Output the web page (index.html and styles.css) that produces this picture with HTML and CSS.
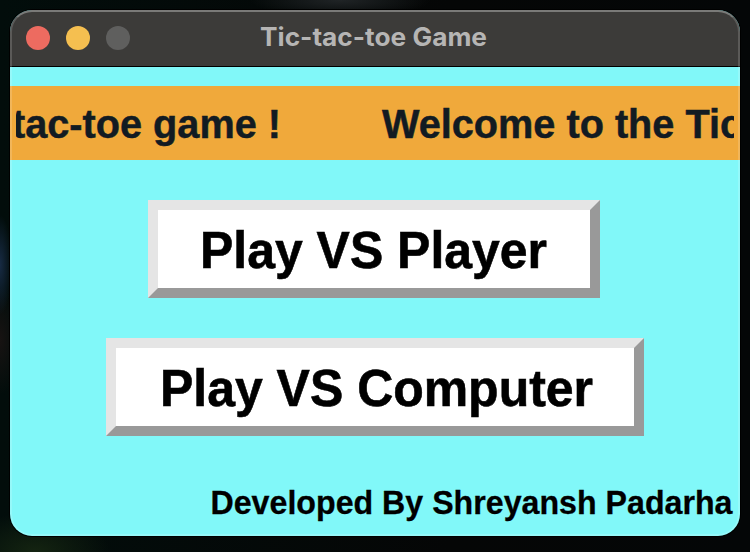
FILE: index.html
```
<!DOCTYPE html>
<html lang="en">
<head>
<meta charset="utf-8">
<title>Tic-tac-toe Game</title>
<link rel="stylesheet" href="styles.css">
</head>
<body>
<main class="window">
  <header class="titlebar">
    <div class="lights"><i class="light red"></i><i class="light yellow"></i><i class="light gray"></i></div>
    <svg class="title" width="240" height="56"><text x="6" y="36" textLength="227" lengthAdjust="spacingAndGlyphs">Tic-tac-toe Game</text></svg>
  </header>
  <div class="banner">
    <svg class="marquee" width="718" height="74">
      <text x="-4" y="52" textLength="269" lengthAdjust="spacingAndGlyphs">tac-toe game !</text>
      <text x="366" y="52" textLength="360" lengthAdjust="spacingAndGlyphs">Welcome to the Tic</text>
    </svg>
  </div>
  <div class="menu">
    <button class="play player"><svg width="432" height="78"><text x="42" y="58" textLength="347" lengthAdjust="spacingAndGlyphs">Play VS Player</text></svg></button>
    <button class="play computer"><svg width="518" height="78"><text x="44" y="58" textLength="433" lengthAdjust="spacingAndGlyphs">Play VS Computer</text></svg></button>
  </div>
  <footer class="credit">
    <svg width="530" height="42"><text x="0.5" y="30" textLength="522" lengthAdjust="spacingAndGlyphs">Developed By Shreyansh Padarha</text></svg>
  </footer>
</main>
</body>
</html>
```
FILE: styles.css
```
* { box-sizing: border-box; }
body {
  margin: 0;
  padding: 10px;
  height: 552px;
  overflow: hidden;
  font-family: "Liberation Sans", Arial, sans-serif;
  font-weight: 700;
  background:
    radial-gradient(ellipse 12px 50px at 0 265px, #172b44, transparent),
    radial-gradient(ellipse 20px 55px at 0 340px, #171312, transparent),
    radial-gradient(ellipse 75px 40px at 35px 552px, #142411, transparent),
    radial-gradient(ellipse 90px 18px at 340px 0, #202426, transparent),
    linear-gradient(90deg, #020d0b, #050606 60%, #040607);
}
svg { display: block; }
.window {
  position: relative;
  display: flex;
  flex-direction: column;
  width: 730px;
  height: 526px;
  border-radius: 22px;
  overflow: hidden;
  background: #81f8f9;
  box-shadow: 0 0 0 1px #000;
}
.window::after {
  content: "";
  position: absolute;
  inset: 0;
  border: 2px solid rgba(255, 255, 255, 0.16);
  border-top-color: rgba(255, 255, 255, 0.32);
  border-radius: 22px;
  pointer-events: none;
}
.titlebar {
  flex: none;
  display: grid;
  grid-template-columns: 1fr 240px 1fr;
  align-items: center;
  height: 57px;
  background: #3c3b39;
  border-bottom: 1px solid #000;
}
.lights { display: flex; gap: 16px; padding-left: 16px; }
.light { width: 24px; height: 24px; border-radius: 50%; }
.red { background: #ed6b60; }
.yellow { background: #f5bf50; }
.gray { background: #5f5f5e; }
.title {
  margin-left: -1px;
  font-family: Inter, sans-serif;
  font-size: 25.5px;
  font-weight: 700;
  fill: #b6b5b4;
}
.banner {
  flex: none;
  height: 74px;
  margin-top: 19px;
  padding: 0 6px;
  background: #f0a93b;
}
.marquee { overflow: hidden; font-size: 41.5px; fill: #121b22; stroke: #121b22; stroke-width: 0.5px; }
.menu {
  display: flex;
  flex-direction: column;
  align-items: center;
  gap: 40px;
  padding-top: 40px;
}
.play {
  height: 98px;
  padding: 0;
  border: 10px solid;
  border-color: #e5e5e5 #999 #999 #e5e5e5;
  background: #fff;
  font: 700 52px "Liberation Sans", Arial, sans-serif;
}
.play svg { stroke: #000; stroke-width: 0.6px; }
.player { width: 452px; margin-right: 2px; }
.computer { width: 538px; }
.credit {
  display: flex;
  justify-content: flex-end;
  margin-top: 48px;
  font-size: 33px;
  stroke: #000;
  stroke-width: 0.3px;
}
```
